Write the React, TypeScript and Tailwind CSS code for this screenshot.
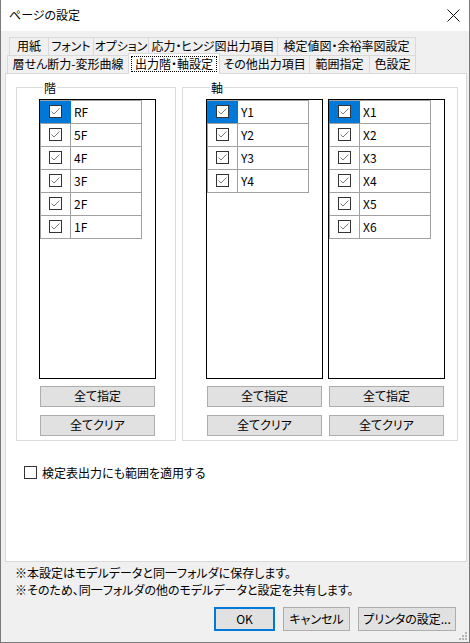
import React from 'react';

const font = "font-['Noto_Sans_CJK_JP','Noto_Sans',sans-serif] [font-feature-settings:'palt']";

function CheckBox({ checked = true }: { checked?: boolean }) {
  return (
    <span className="flex h-[13px] w-[13px] items-center justify-center border border-[#333333] bg-white">
      {checked && (
        <svg width="11" height="11" viewBox="0 0 11 11">
          <path d="M1.5 5.5 L4 8 L9.5 2.5" fill="none" stroke="#7a7a7a" strokeWidth="1" />
        </svg>
      )}
    </span>
  );
}

function ListRow({ label, active, first }: { label: string; active?: boolean; first?: boolean }) {
  return (
    <div className={`flex ${first ? 'h-[24px] border-t' : 'h-[23px]'} w-[102px] border-b border-[#a0a0a0]`}>
      <div
        className={`flex w-[31px] items-center justify-center border-x ${
          active ? 'border-[#0078d7] bg-[#0078d7]' : 'border-[#a0a0a0]'
        }`}
      >
        <CheckBox />
      </div>
      <div className="flex w-[71px] items-center border-r border-[#a0a0a0] pl-[3px] text-[12px] leading-none">
        {label}
      </div>
    </div>
  );
}

function ListColumn({ items }: { items: string[] }) {
  return (
    <div className="flex w-[117px] flex-col">
      <div className="h-[280px] border border-black bg-white">
        {items.map((it, i) => (
          <ListRow key={it} label={it} active={i === 0} first={i === 0} />
        ))}
      </div>
      <button className="ml-[1px] mt-[7px] h-[21px] w-[115px] border border-[#adadad] bg-[#e1e1e1] text-[12px] leading-none">
        全て指定
      </button>
      <button className="ml-[1px] mt-[8px] h-[21px] w-[115px] border border-[#adadad] bg-[#e1e1e1] text-[12px] leading-none">
        全てクリア
      </button>
    </div>
  );
}

const row1 = [
  { label: '用紙', w: 'w-[39px]' },
  { label: 'フォント', w: 'w-[45px]' },
  { label: 'オプション', w: 'w-[55px]' },
  { label: '応力・ヒンジ図出力項目', w: 'w-[129px]' },
  { label: '検定値図・余裕率図設定', w: 'w-[139px] border-r' },
];

export default function App() {
  return (
    <div className={`flex h-[643px] w-[470px] flex-col border-x border-b border-[#7a7a7a] bg-[#f0f0f0] text-black ${font}`}>
      {/* title bar */}
      <div className="flex h-[31px] items-center justify-between bg-white pl-[8px] pr-[8px]">
        <span className="text-[12px] leading-none">ページの設定</span>
        <svg width="13" height="13" viewBox="0 0 13 13" className="mr-[1px] mt-[1px]">
          <path d="M0.5 0.5 L12.5 12.5 M12.5 0.5 L0.5 12.5" stroke="#111" strokeWidth="1" />
        </svg>
      </div>

      {/* tabs */}
      <div className="mt-[6px] ml-[8px] flex h-[18px]">
        {row1.map(t => (
          <div
            key={t.label}
            className={`flex ${t.w} items-center justify-center border-l border-t border-[#d9d9d9] text-[12px] leading-none`}
          >
            {t.label}
          </div>
        ))}
      </div>
      <div className="ml-[6px] flex h-[18px]">
        <div className="flex w-[121px] items-center justify-center border-l border-t border-[#d9d9d9] text-[12px] leading-none">
          層せん断力-変形曲線
        </div>
        <div className="relative z-10 -mt-[2px] h-[21px] w-[92px] border-x border-t border-[#d9d9d9] bg-white p-[2px]">
          <span className="flex h-full w-full items-center justify-center border border-dotted border-black text-[12px] leading-none">
            出力階・軸設定
          </span>
        </div>
        <div className="flex w-[89px] items-center justify-center border-t border-[#d9d9d9] text-[12px] leading-none">
          その他出力項目
        </div>
        <div className="flex w-[60px] items-center justify-center border-l border-t border-[#d9d9d9] text-[12px] leading-none">
          範囲指定
        </div>
        <div className="flex w-[47px] items-center justify-center border-x border-t border-[#d9d9d9] text-[12px] leading-none">
          色設定
        </div>
      </div>

      {/* panel */}
      <div className="ml-[4px] flex h-[490px] w-[462px] flex-col border border-[#d9d9d9] bg-white">
        <div className="mt-[6px] ml-[10px] flex">
          <fieldset className="h-[361px] w-[160px] border border-[#dcdcdc] pl-[22px]">
            <legend className="ml-[4px] px-[1px] text-[12px] leading-[16px]">階</legend>
            <div className="mt-[3px]">
              <ListColumn items={['RF', '5F', '4F', '3F', '2F', '1F']} />
            </div>
          </fieldset>
          <fieldset className="ml-[6px] h-[361px] w-[276px] border border-[#dcdcdc] pl-[23px]">
            <legend className="ml-[4px] px-[1px] text-[12px] leading-[16px]">軸</legend>
            <div className="mt-[3px] flex gap-[5px]">
              <ListColumn items={['Y1', 'Y2', 'Y3', 'Y4']} />
              <ListColumn items={['X1', 'X2', 'X3', 'X4', 'X5', 'X6']} />
            </div>
          </fieldset>
        </div>
        <div className="mt-[24px] ml-[18px] flex h-[16px] items-center gap-[5px]">
          <CheckBox checked={false} />
          <span className="text-[12px] leading-[16px]">検定表出力にも範囲を適用する</span>
        </div>
      </div>

      {/* notes */}
      <div className="mt-[2px] pl-[14px] text-[12px] leading-[17px]">
        <p>※本設定はモデルデータと同一フォルダに保存します。</p>
        <p>※そのため、同一フォルダの他のモデルデータと設定を共有します。</p>
      </div>

      {/* buttons */}
      <div className="mt-[9px] flex justify-end gap-[8px] pr-[13px]">
        <button className="h-[24px] w-[61px] border-2 border-[#0078d7] bg-[#e1e1e1] text-[12px] leading-none">OK</button>
        <button className="h-[24px] w-[67px] border border-[#adadad] bg-[#e1e1e1] text-[12px] leading-none">キャンセル</button>
        <button className="h-[24px] w-[98px] border border-[#adadad] bg-[#e1e1e1] text-[12px] leading-none">プリンタの設定...</button>
      </div>

      {/* size grip */}
      <div className="mt-auto flex justify-end pb-[1px] pr-[1px]">
        <svg width="10" height="10" viewBox="0 0 10 10">
          {[
            [7, 1],
            [4, 4],
            [7, 4],
            [1, 7],
            [4, 7],
            [7, 7],
          ].map(([x, y]) => (
            <rect key={`${x}-${y}`} x={x} y={y} width="2" height="2" fill="#b4b4b4" />
          ))}
        </svg>
      </div>
    </div>
  );
}
